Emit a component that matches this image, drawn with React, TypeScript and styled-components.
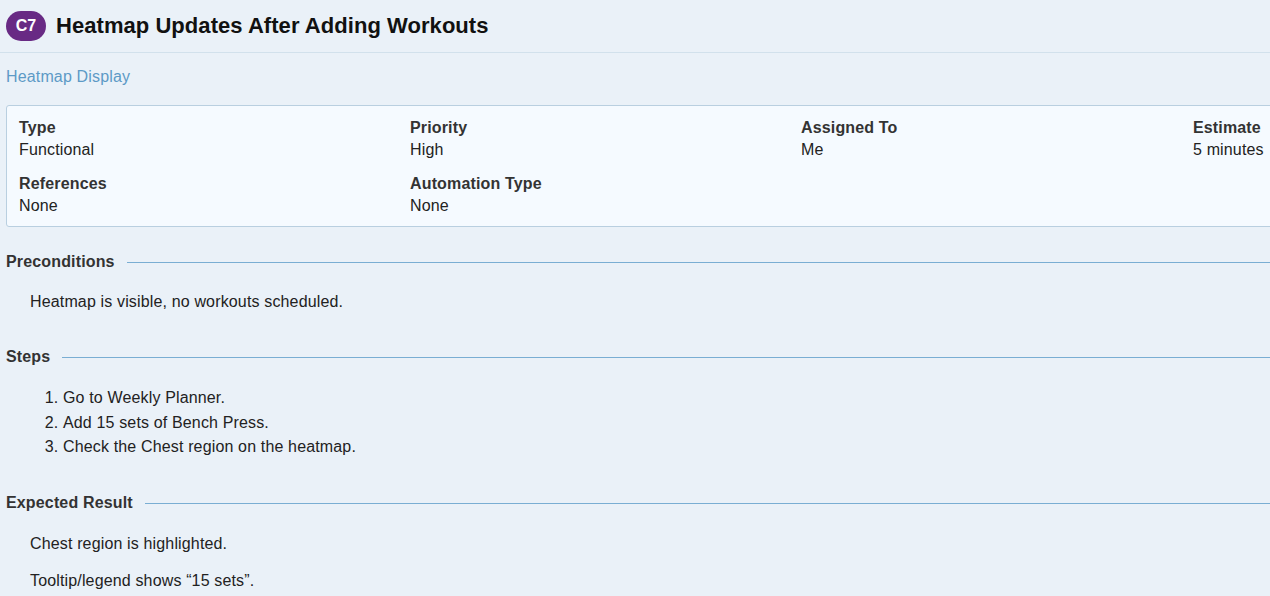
import styled, { createGlobalStyle } from 'styled-components';

const GlobalStyle = createGlobalStyle`
  html, body {
    margin: 0;
    padding: 0;
    overflow: hidden;
    background: #eaf1f8;
  }
  body {
    font-family: 'Liberation Sans', Arial, sans-serif;
    color: #222;
  }
`;

const Page = styled.div`
  width: 1604px;
  padding: 0 6px 20px;
  box-sizing: border-box;
  font-size: 16px;
  line-height: 22px;
  letter-spacing: 0.15px;
`;

const Header = styled.header`
  display: flex;
  align-items: center;
  gap: 10px;
  height: 52px;
  border-bottom: 1px solid #d2e1ec;
  margin: 0 -6px;
  padding: 0 6px;
  letter-spacing: 0;
`;

const Badge = styled.span`
  display: inline-flex;
  align-items: center;
  justify-content: center;
  width: 40px;
  height: 30px;
  border-radius: 15px;
  background: #682a84;
  color: #fff;
  font-weight: 700;
  font-size: 16px;
`;

const Title = styled.h1`
  margin: 0;
  font-size: 22px;
  font-weight: 700;
  color: #111;
  letter-spacing: 0.05px;
`;

const Section = styled.div`
  margin: 13px 0 17px;
  color: #5d9ac6;
`;

const InfoBox = styled.div`
  display: grid;
  grid-template-columns: repeat(3, 391px) 1fr;
  row-gap: 12px;
  padding: 11px 12px 9px;
  background: #f5faff;
  border: 1px solid #b9cfe0;
  border-radius: 3px;

  & > div:nth-child(4n) {
    padding-left: 1px;
  }
`;

const Field = styled.div`
  color: #222;
`;

const Label = styled.div`
  font-weight: 700;
  color: #333;
`;

const Block = styled.section`
  margin-top: 33px;

  &:first-of-type {
    margin-top: 24px;
  }
`;

const Heading = styled.h2`
  display: flex;
  align-items: center;
  gap: 12px;
  margin: 0;
  font-size: 16px;
  line-height: 22px;
  font-weight: 700;
  color: #333;

  &::after {
    content: '';
    flex: 1;
    height: 1px;
    background: #7aaed3;
  }
`;

const Text = styled.p<{ $top?: number }>`
  margin: ${(p) => p.$top ?? 15}px 0 0 24px;
  color: #222;
`;

const Steps = styled.ol`
  margin: 19px 0 0;
  padding: 0 0 1px 57px;
  color: #222;

  li + li {
    margin-top: 2.5px;
  }
`;

const fields = [
  { label: 'Type', value: 'Functional' },
  { label: 'Priority', value: 'High' },
  { label: 'Assigned To', value: 'Me' },
  { label: 'Estimate', value: '5 minutes' },
  { label: 'References', value: 'None' },
  { label: 'Automation Type', value: 'None' },
];

const steps = [
  'Go to Weekly Planner.',
  'Add 15 sets of Bench Press.',
  'Check the Chest region on the heatmap.',
];

const App = () => (
  <>
    <GlobalStyle />
    <Page>
      <Header>
        <Badge>C7</Badge>
        <Title>Heatmap Updates After Adding Workouts</Title>
      </Header>
      <Section>Heatmap Display</Section>
      <InfoBox>
        {fields.map((f) => (
          <Field key={f.label}>
            <Label>{f.label}</Label>
            {f.value}
          </Field>
        ))}
      </InfoBox>
      <Block>
        <Heading>Preconditions</Heading>
        <Text $top={18}>Heatmap is visible, no workouts scheduled.</Text>
      </Block>
      <Block>
        <Heading>Steps</Heading>
        <Steps>
          {steps.map((s) => (
            <li key={s}>{s}</li>
          ))}
        </Steps>
      </Block>
      <Block>
        <Heading>Expected Result</Heading>
        <Text $top={19}>Chest region is highlighted.</Text>
        <Text>Tooltip/legend shows “15 sets”.</Text>
      </Block>
    </Page>
  </>
);

export default App;
